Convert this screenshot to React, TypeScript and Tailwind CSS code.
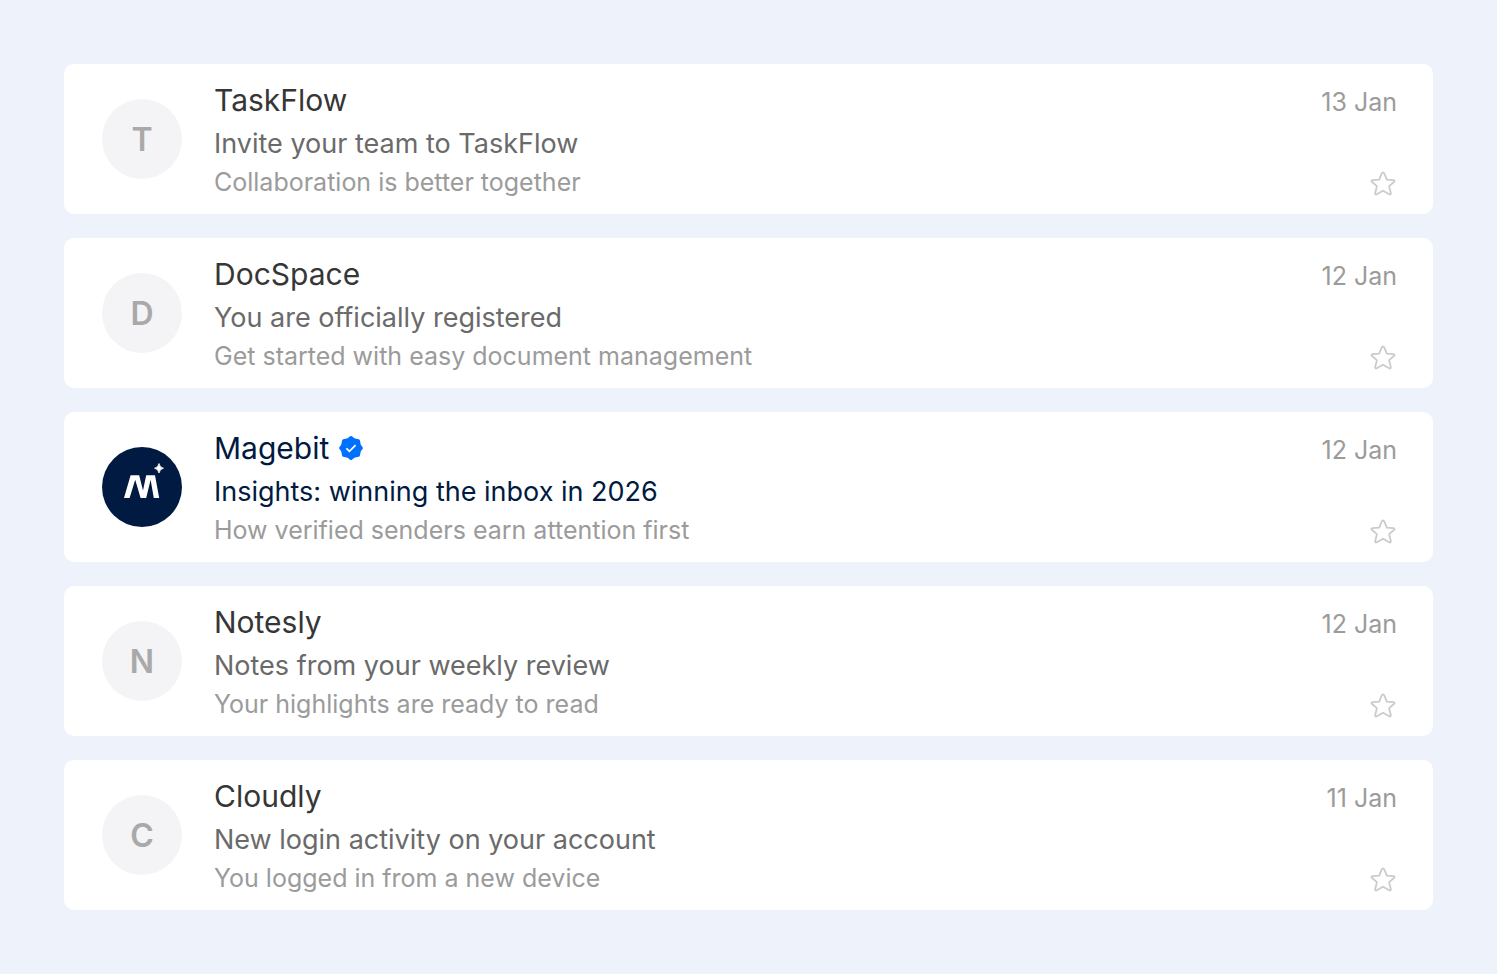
import React from 'react';

interface Mail {
  id: number;
  sender: string;
  subject: string;
  preview: string;
  date: string;
  verified?: boolean;
}

const mails: Mail[] = [
  { id: 1, sender: 'TaskFlow', subject: 'Invite your team to TaskFlow', preview: 'Collaboration is better together', date: '13 Jan' },
  { id: 2, sender: 'DocSpace', subject: 'You are officially registered', preview: 'Get started with easy document management', date: '12 Jan' },
  { id: 3, sender: 'Magebit', subject: 'Insights: winning the inbox in 2026', preview: 'How verified senders earn attention first', date: '12 Jan', verified: true },
  { id: 4, sender: 'Notesly', subject: 'Notes from your weekly review', preview: 'Your highlights are ready to read', date: '12 Jan' },
  { id: 5, sender: 'Cloudly', subject: 'New login activity on your account', preview: 'You logged in from a new device', date: '11 Jan' },
];

const BrandLogo = () => (
  <svg viewBox="0 0 80 80" className="h-20 w-20 shrink-0" role="img" aria-label="Magebit">
    <circle cx="40" cy="40" r="40" fill="#001a41" />
    {/* Four slanted strokes of the mark */}
    <path
      d="M22 51 L28.6 28.3 H37.2 L41 43.5 L44.2 28.3 H53 L57.2 51 H51.8 L48.6 32.8 L44.2 51 H38.6 L33.2 32.8 L27.6 51Z"
      fill="#fff"
    />
    <path d="M57 16.5 Q57.8 20.5 61.5 21.2 Q57.8 21.9 57 26 Q56.2 21.9 52.5 21.2 Q56.2 20.5 57 16.5Z" fill="#fff" stroke="#fff" strokeWidth="0.8" />
  </svg>
);

const VerifiedBadge = () => (
  <svg viewBox="0 0 24 24" className="h-6 w-6" role="img" aria-label="Verified sender">
    <path
      d="M12 1.6l3 2.1 4.4.9.9 4.4 2.1 3-2.1 3-.9 4.4-4.4.9-3 2.1-3-2.1-4.4-.9-.9-4.4-2.1-3 2.1-3 .9-4.4 4.4-.9z"
      fill="#0070ff"
      stroke="#0070ff"
      strokeWidth="3"
      strokeLinejoin="round"
    />
    <path d="M7.4 12.3l3 3 6.2-6.2" fill="none" stroke="#fff" strokeWidth="1.8" />
  </svg>
);

const StarIcon = () => (
  <svg viewBox="0 0 28 32" className="h-8 w-7" fill="none" stroke="#cbcbcb" strokeWidth="1.8" strokeLinejoin="round">
    <path d="M14 4.5 Q14.9 4.5 15.3 5.5 L17.8 11.7 L24.4 12.1 Q26.2 12.5 25.2 13.7 L20.1 18.1 L21.8 25 Q22 27.1 20.2 26.3 L14 22.8 L7.8 26.3 Q6 27.1 6.2 25 L7.9 18.1 L2.8 13.7 Q1.8 12.5 3.6 12.1 L10.2 11.7 L12.7 5.5 Q13.1 4.5 14 4.5Z" />
  </svg>
);

const MailRow = ({ mail }: { mail: Mail }) => (
  <li className="flex items-stretch rounded-[10px] bg-white py-3.5 pl-[38px] pr-9">
    <div className="flex items-center">
      {mail.verified ? (
        <BrandLogo />
      ) : (
        <div className="flex h-20 w-20 items-center justify-center rounded-full bg-[#f4f4f6] pt-0.5 text-[32px] font-semibold text-[#a9a9a9]">
          {mail.sender[0]}
        </div>
      )}
    </div>
    <div className="ml-8 min-w-0 flex-1">
      <h2 className={`flex items-center gap-2.5 text-[30px] leading-11 ${mail.verified ? 'text-[#001a41]' : 'text-[#363636]'}`}>
        {mail.sender}
        {mail.verified && <VerifiedBadge />}
      </h2>
      <p className={`mt-0.5 text-[27px] leading-10 ${mail.verified ? 'text-[#001a41]' : 'text-[#6a6a6a]'}`}>{mail.subject}</p>
      <p className="text-[25px] leading-9 text-[#9b9b9b]">{mail.preview}</p>
    </div>
    <div className="flex flex-col items-end justify-between">
      <time className="text-[25px] leading-12 text-[#9b9b9b]">{mail.date}</time>
      <button type="button" aria-label={`Star ${mail.sender}`}>
        <StarIcon />
      </button>
    </div>
  </li>
);

const App = () => {
  return (
    <main className="min-h-screen bg-[#eef3fb] p-16 font-['Inter',sans-serif]">
      <ul className="flex flex-col gap-6">
        {mails.map((mail) => (
          <MailRow key={mail.id} mail={mail} />
        ))}
      </ul>
    </main>
  );
};

export default App;
